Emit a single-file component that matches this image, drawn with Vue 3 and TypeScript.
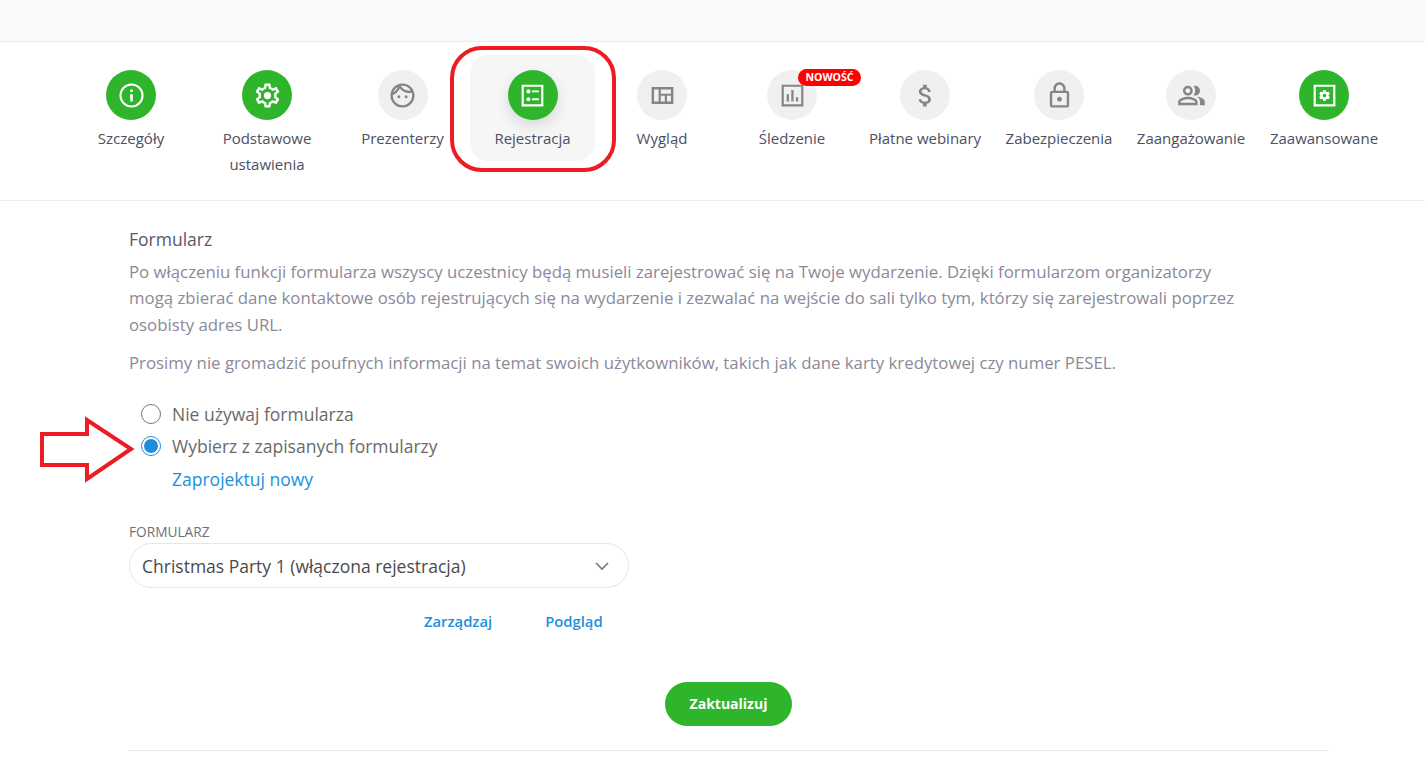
<template>
  <div class="page">
    <div class="topbar"></div>

    <nav class="tabs">
      <div v-for="tab in tabs" :key="tab.label" class="tab" :class="{ selected: tab.selected }">
        <div class="tab-circle" :class="{ on: tab.on }">
          <svg :width="29" :height="29" viewBox="0 0 24 24">
            <path :d="tab.icon" fill="currentColor" fill-rule="evenodd" />
          </svg>
          <span v-if="tab.badge" class="badge">{{ tab.badge }}</span>
        </div>
        <div class="tab-label">{{ tab.label }}</div>
      </div>
    </nav>

    <main class="content">
      <h2 class="title">Formularz</h2>
      <p class="desc">
        Po włączeniu funkcji formularza wszyscy uczestnicy będą musieli zarejestrować się na Twoje wydarzenie. Dzięki formularzom organizatorzy
        mogą zbierać dane kontaktowe osób rejestrujących się na wydarzenie i zezwalać na wejście do sali tylko tym, którzy się zarejestrowali poprzez
        osobisty adres URL.
      </p>
      <p class="desc second">
        Prosimy nie gromadzić poufnych informacji na temat swoich użytkowników, takich jak dane karty kredytowej czy numer PESEL.
      </p>

      <div class="radios">
        <label class="radio-row">
          <input v-model="mode" type="radio" value="none" />
          <span>Nie używaj formularza</span>
        </label>
        <label class="radio-row">
          <input v-model="mode" type="radio" value="saved" />
          <span>Wybierz z zapisanych formularzy</span>
        </label>
        <a class="new-link">Zaprojektuj nowy</a>
      </div>

      <div class="field-label">FORMULARZ</div>
      <div class="select">
        <span>Christmas Party 1 (włączona rejestracja)</span>
        <svg width="16" height="10" viewBox="0 0 16 10">
          <path d="M2 2l6 6 6-6" fill="none" stroke="#777" stroke-width="1.6" />
        </svg>
      </div>
      <div class="form-links">
        <a>Zarządzaj</a>
        <a>Podgląd</a>
      </div>

      <div class="actions">
        <button class="submit" type="button">Zaktualizuj</button>
      </div>
      <hr class="divider" />
    </main>

    <!-- red annotations pasted over the screenshot -->
    <svg class="mark-box" width="172" height="132" viewBox="0 0 172 132">
      <rect x="5" y="5" width="162" height="122" rx="30" fill="none" stroke="#ed1c24" stroke-width="4" />
    </svg>
    <svg class="mark-arrow" width="100" height="72" viewBox="0 0 100 72">
      <path d="M3 20H48V6L92 35 48 65V51H3z" fill="#fff" stroke="#ed1c24" stroke-width="4" stroke-miterlimit="8" />
    </svg>
  </div>
</template>

<script setup lang="ts">
import { ref } from 'vue'

interface Tab {
  label: string
  icon: string
  on?: boolean
  selected?: boolean
  badge?: string
}

const mode = ref('saved')

// small cog used inside the "Zaawansowane" square
const smallCog = (cx: number, cy: number, outer: number, inner: number, teeth: number) => {
  const pts: string[] = []
  const step = (Math.PI * 2) / teeth
  for (let i = 0; i < teeth; i++) {
    const a = i * step - Math.PI / 2
    const corners: [number, number][] = [
      [a - step * 0.42, inner],
      [a - step * 0.18, outer],
      [a + step * 0.18, outer],
      [a + step * 0.42, inner]
    ]
    corners.forEach(([ang, r]) => {
      pts.push(`${(cx + Math.cos(ang) * r).toFixed(2)} ${(cy + Math.sin(ang) * r).toFixed(2)}`)
    })
  }
  return `M${pts.join('L')}z`
}

const gear = 'M19.43 12.98c.04-.32.07-.64.07-.98 0-.34-.03-.66-.07-.98l2.11-1.65c.19-.15.24-.42.12-.64l-2-3.46c-.09-.16-.26-.25-.44-.25-.06 0-.12.01-.17.03l-2.49 1c-.52-.4-1.08-.73-1.69-.98l-.38-2.65C14.46 2.18 14.25 2 14 2h-4c-.25 0-.46.18-.49.42l-.38 2.65c-.61.25-1.17.59-1.69.98l-2.49-1c-.06-.02-.12-.03-.18-.03-.17 0-.34.09-.43.25l-2 3.46c-.13.22-.07.49.12.64l2.11 1.65c-.04.32-.07.65-.07.98 0 .33.03.66.07.98l-2.11 1.65c-.19.15-.24.42-.12.64l2 3.46c.09.16.26.25.44.25.06 0 .12-.01.17-.03l2.49-1c.52.4 1.08.73 1.69.98l.38 2.65c.03.24.24.42.49.42h4c.25 0 .46-.18.49-.42l.38-2.65c.61-.25 1.17-.59 1.69-.98l2.49 1c.06.02.12.03.18.03.17 0 .34-.09.43-.25l2-3.46c.12-.22.07-.49-.12-.64l-2.11-1.65zm-1.98-1.71c.04.31.05.52.05.73 0 .21-.02.43-.05.73l-.14 1.13.89.7 1.08.84-.7 1.21-1.27-.51-1.04-.42-.9.68c-.43.32-.84.56-1.25.73l-1.06.43-.16 1.13-.2 1.35h-1.4l-.19-1.35-.16-1.13-1.06-.43c-.43-.18-.83-.41-1.23-.71l-.91-.7-1.06.43-1.27.51-.7-1.21 1.08-.84.89-.7-.14-1.13c-.03-.31-.05-.54-.05-.74s.02-.43.05-.73l.14-1.13-.89-.7-1.08-.84.7-1.21 1.27.51 1.04.42.9-.68c.43-.32.84-.56 1.25-.73l1.06-.43.16-1.13.2-1.35h1.39l.19 1.35.16 1.13 1.06.43c.43.18.83.41 1.23.71l.91.7 1.06-.43 1.27-.51.7 1.21-1.07.85-.89.7.14 1.13z M12 9a3 3 0 1 0 0 6 3 3 0 0 0 0-6z'

const tabs: Tab[] = [
  {
    label: 'Szczegóły',
    on: true,
    icon: 'M12 2a10 10 0 1 0 0 20 10 10 0 0 0 0-20zm0 1.7a8.3 8.3 0 1 1 0 16.6 8.3 8.3 0 0 1 0-16.6z M10.9 11h2.2v6h-2.2z M10.9 7h2.2v2.2h-2.2z'
  },
  { label: 'Podstawowe ustawienia', on: true, icon: gear },
  {
    label: 'Prezenterzy',
    icon: 'M10.25 13c0 .69-.56 1.25-1.25 1.25S7.75 13.69 7.75 13s.56-1.25 1.25-1.25 1.25.56 1.25 1.25zM15 11.75c-.69 0-1.25.56-1.25 1.25s.56 1.25 1.25 1.25 1.25-.56 1.25-1.25-.56-1.25-1.25-1.25zm7 .25c0 5.52-4.48 10-10 10S2 17.52 2 12 6.48 2 12 2s10 4.48 10 10zM10.66 4.12C12.06 6.44 14.6 8 17.5 8c.46 0 .91-.05 1.34-.12C17.44 5.56 14.9 4 12 4c-.46 0-.91.05-1.34.12zM4.42 9.47c1.71-.97 3.03-2.55 3.66-4.44C6.37 6 5.05 7.58 4.42 9.47zM20 12c0-.78-.12-1.53-.33-2.24-.7.15-1.42.24-2.17.24-3.13 0-5.92-1.44-7.76-3.69C8.69 8.87 6.6 10.88 4 11.86c.01.04 0 .09 0 .14 0 4.41 3.59 8 8 8s8-3.59 8-8z'
  },
  {
    label: 'Rejestracja',
    on: true,
    selected: true,
    icon: 'M3 3h18v18H3z M4.8 4.8v14.4h14.4V4.8z M8.6 6.9a1.7 1.7 0 1 1 0 3.4 1.7 1.7 0 0 1 0-3.4z M8.6 13.4a1.7 1.7 0 1 1 0 3.4 1.7 1.7 0 0 1 0-3.4z M11.6 7.8h5.6v1.6h-5.6z M11.6 14.3h5.6v1.6h-5.6z'
  },
  {
    label: 'Wygląd',
    icon: 'M3 5h18v14H3z M5 7v10h3.8V7z M10.6 7v3.6H19V7z M10.6 12.3V17h3.3v-4.7z M15.7 12.3V17H19v-4.7z'
  },
  {
    label: 'Śledzenie',
    badge: 'NOWOŚĆ',
    icon: 'M3 3h18v18H3z M4.8 4.8v14.4h14.4V4.8z M7.2 11h1.9v6H7.2z M11 7.5h1.9V17H11z M14.8 13.5h1.9V17h-1.9z'
  },
  {
    label: 'Płatne webinary',
    icon: 'M11.8 10.9c-2.27-.59-3-1.2-3-2.15 0-1.09 1.01-1.85 2.7-1.85 1.78 0 2.44.85 2.5 2.1h2.21c-.07-1.72-1.12-3.3-3.21-3.81V3h-3v2.16c-1.94.42-3.5 1.68-3.5 3.61 0 2.31 1.91 3.46 4.7 4.13 2.5.6 3 1.48 3 2.41 0 .69-.49 1.79-2.7 1.79-2.06 0-2.87-.92-2.98-2.1h-2.2c.12 2.19 1.76 3.42 3.68 3.83V21h3v-2.15c1.95-.37 3.5-1.5 3.5-3.55 0-2.84-2.43-3.81-4.7-4.4z'
  },
  {
    label: 'Zabezpieczenia',
    icon: 'M18 8h-1V6c0-2.76-2.24-5-5-5S7 3.24 7 6v2H6c-1.1 0-2 .9-2 2v10c0 1.1.9 2 2 2h12c1.1 0 2-.9 2-2V10c0-1.1-.9-2-2-2zM9 6c0-1.66 1.34-3 3-3s3 1.34 3 3v2H9V6zm9 14H6V10h12v10zm-6-3c1.1 0 2-.9 2-2s-.9-2-2-2-2 .9-2 2 .9 2 2 2z'
  },
  {
    label: 'Zaangażowanie',
    icon: 'M16.67 13.13C18.04 14.06 19 15.32 19 17v3h4v-3c0-2.18-3.57-3.47-6.33-3.87zM15 12c2.21 0 4-1.79 4-4s-1.79-4-4-4c-.47 0-.91.1-1.33.24C14.5 5.27 15 6.58 15 8s-.5 2.73-1.33 3.76c.42.14.86.24 1.33.24zM9 12c2.21 0 4-1.79 4-4s-1.79-4-4-4-4 1.79-4 4 1.79 4 4 4zm0-6c1.1 0 2 .9 2 2s-.9 2-2 2-2-.9-2-2 .9-2 2-2zM9 13c-2.67 0-8 1.34-8 4v3h16v-3c0-2.66-5.33-4-8-4zm6 5H3v-.99C3.2 16.29 6.3 15 9 15s5.8 1.29 6 2z'
  },
  {
    label: 'Zaawansowane',
    on: true,
    icon: `M3 3h18v18H3z M4.8 4.8v14.4h14.4V4.8z ${smallCog(12, 12, 4.6, 3.4, 6)} M12 10.5a1.5 1.5 0 1 0 0 3 1.5 1.5 0 0 0 0-3z`
  }
]
</script>

<style scoped>
.page {
  position: relative;
  width: 1425px;
  height: 761px;
  overflow: hidden;
  background: #fff;
  font-family: "Open Sans", sans-serif;
}

.topbar {
  height: 41px;
  background: #f8f9fa;
  border-bottom: 1px solid #e9ebee;
}

.tabs {
  display: grid;
  grid-template-columns: 136px 136px 135px 125px 134px 126px 140px 128px 136px 130px;
  align-items: start;
  height: 158px;
  padding-left: 63px;
  border-bottom: 1px solid #eceef0;
}

.tab {
  display: flex;
  flex-direction: column;
  align-items: center;
  height: 106px;
  margin-top: 13px;
  padding-top: 15px;
  box-sizing: border-box;
  border-radius: 18px;
}

.tab.selected {
  background: #f6f6f6;
}

.tab-circle {
  position: relative;
  flex-shrink: 0;
  display: flex;
  align-items: center;
  justify-content: center;
  width: 50px;
  height: 50px;
  border-radius: 50%;
  background: #f0f0f0;
  color: #858585;
}

.tab-circle.on {
  background: #2fb52c;
  color: #fff;
}

.tab.selected .tab-circle {
  box-shadow: 0 6px 14px rgba(0, 0, 0, 0.12);
}

.badge {
  position: absolute;
  top: -1px;
  left: 31px;
  height: 17px;
  padding: 0 7.5px;
  border-radius: 9px;
  background: #f00;
  color: #fff;
  font-size: 10.5px;
  font-weight: 700;
  line-height: 17px;
  white-space: nowrap;
}

.tab-label {
  flex-shrink: 0;
  margin-top: 5px;
  color: #4b5064;
  font-size: 15px;
  line-height: 26px;
  text-align: center;
  max-width: 118px;
}

.content {
  padding: 27px 0 0 129px;
  width: 1200px;
}

.title {
  margin: 0;
  color: #555a66;
  font-size: 17.5px;
  font-weight: 400;
  line-height: 22px;
}

.desc {
  margin: 9px 0 0;
  width: 1115px;
  color: #8a8a99;
  font-size: 16.8px;
  line-height: 26.4px;
}

.desc.second {
  margin-top: 12px;
}

.radios {
  display: flex;
  flex-direction: column;
  align-items: flex-start;
  margin: 21px 0 0 12px;
}

.radio-row {
  display: flex;
  align-items: center;
  gap: 11px;
  height: 32px;
  color: #6a6a6a;
  font-size: 17.5px;
}

.radio-row input {
  appearance: none;
  position: relative;
  width: 20px;
  height: 20px;
  margin: 0;
  border: 1.5px solid #777;
  border-radius: 50%;
  background: #fff;
}

.radio-row input:checked {
  border-color: #1c8fdc;
}

.radio-row input:checked::after {
  content: "";
  position: absolute;
  inset: 2px;
  border-radius: 50%;
  background: #1c8fdc;
}

.new-link {
  margin: 2px 0 0 31px;
  color: #1c8fdc;
  font-size: 17.5px;
  line-height: 30px;
}

.field-label {
  margin-top: 30px;
  color: #6f6f78;
  font-size: 13.7px;
  line-height: 16px;
}

.select {
  display: flex;
  align-items: center;
  justify-content: space-between;
  box-sizing: border-box;
  width: 500px;
  height: 45px;
  margin-top: 3px;
  padding: 1px 18px 0 12px;
  border: 1px solid #e6e6e6;
  border-radius: 23px;
  color: #4a4a4a;
  font-size: 17.5px;
}

.form-links {
  display: flex;
  gap: 53px;
  width: 500px;
  margin-top: 23px;
  padding-left: 295px;
  box-sizing: border-box;
  color: #1c8fdc;
  font-size: 14.8px;
  font-weight: 600;
  line-height: 20px;
}

.actions {
  display: flex;
  justify-content: center;
  margin-top: 51px;
  padding-right: 1px;
}

.submit {
  width: 127px;
  height: 44px;
  border: 0;
  border-radius: 22px;
  background: #2fb52c;
  color: #fff;
  font-family: inherit;
  font-size: 14px;
  font-weight: 700;
}

.divider {
  width: 1200px;
  margin: 24px 0 0;
  border: 0;
  border-top: 1px solid #e6e6e6;
}

.mark-box {
  position: absolute;
  top: 43px;
  left: 447px;
}

.mark-arrow {
  position: absolute;
  top: 414px;
  left: 39px;
}
</style>
